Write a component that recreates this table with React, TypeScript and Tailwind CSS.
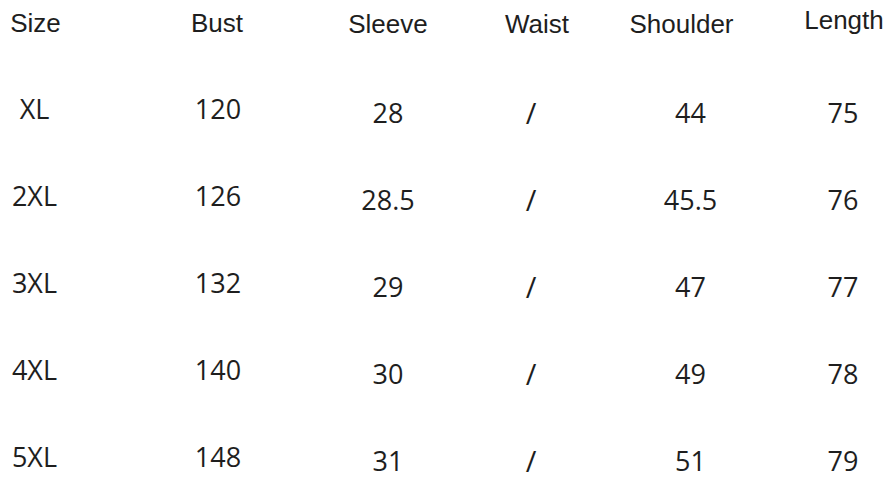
import React from "react";

type Col = {
  title: string;
  values: string[];
  width: string;
  gap: string;
  headH: string;
  headPt: string;
  headShift: string;
  dataShift: string;
  dataSize: string;
};

const OPEN = '"Open Sans", "Noto Sans", sans-serif';

const cols: Col[] = [
  { title: "Size", values: ["XL", "2XL", "3XL", "4XL", "5XL"], width: "w-[69px]", gap: "ml-0", headH: "h-[66px]", headPt: "pt-[3px]", headShift: "pl-[2px]", dataShift: "pr-0", dataSize: "text-[27px]" },
  { title: "Bust", values: ["120", "126", "132", "140", "148"], width: "w-[100px]", gap: "ml-[99px]", headH: "h-[66px]", headPt: "pt-[2.5px]", headShift: "pr-[2px]", dataShift: "pr-0", dataSize: "text-[27px]" },
  { title: "Sleeve", values: ["28", "28.5", "29", "30", "31"], width: "w-[100px]", gap: "ml-[70px]", headH: "h-[70px]", headPt: "pt-[3.5px]", headShift: "pr-0", dataShift: "pr-0", dataSize: "text-[27px]" },
  { title: "Waist", values: ["/", "/", "/", "/", "/"], width: "w-[100px]", gap: "ml-[46px]", headH: "h-[70px]", headPt: "pt-[4px]", headShift: "pl-[6px]", dataShift: "pr-[6px]", dataSize: "text-[29px]" },
  { title: "Shoulder", values: ["44", "45.5", "47", "49", "51"], width: "w-[120px]", gap: "ml-[42px]", headH: "h-[70px]", headPt: "pt-[4px]", headShift: "pr-[9px]", dataShift: "pl-[9px]", dataSize: "text-[27px]" },
  { title: "Length", values: ["75", "76", "77", "78", "79"], width: "w-[100px]", gap: "ml-[47px]", headH: "h-[70px]", headPt: "pt-0", headShift: "pl-[2px]", dataShift: "pr-0", dataSize: "text-[27px]" },
];

export default function App() {
  return (
    <div className="w-[893px] h-[481px] overflow-hidden bg-white text-[#1e1e1e]">
      <div className="flex">
        {cols.map((c) => (
          <div key={c.title} className={`flex flex-col shrink-0 ${c.width} ${c.gap}`}>
            <div
              className={`${c.headH} ${c.headPt} ${c.headShift} text-center text-[26px] leading-[40px]`}
              style={{ fontFamily: '"Liberation Sans", Arial, sans-serif' }}
            >
              {c.title}
            </div>
            {c.values.map((v, i) => (
              <div
                key={i}
                className={`${i < 4 ? "h-[87px]" : "h-auto"} pt-[25.5px] ${c.dataShift} ${c.dataSize} text-center leading-[34px]`}
                style={{ fontFamily: OPEN }}
              >
                {v}
              </div>
            ))}
          </div>
        ))}
      </div>
    </div>
  );
}
